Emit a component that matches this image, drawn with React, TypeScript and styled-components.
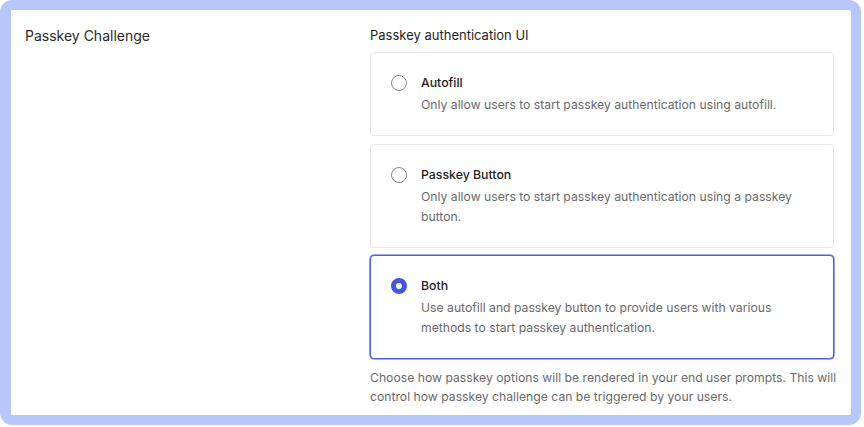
import { useState } from "react";
import styled, { createGlobalStyle } from "styled-components";

const Global = createGlobalStyle`
  html, body { margin: 0; padding: 0; background: #fff; }
  body { font-family: Inter, "Noto Sans", sans-serif; -webkit-font-smoothing: antialiased; }
`;

const Frame = styled.div`
  box-sizing: border-box;
  width: 861px;
  height: 425px;
  border: 10px solid #b7c7fb;
  border-left-width: 11px;
  border-radius: 12px;
  background: #fff;
  display: grid;
  grid-template-columns: 345px 464px;
  padding: 0 0 0 14px;
  overflow: hidden;
`;

const SectionLabel = styled.div`
  padding-top: 16px;
  font-size: 14px;
  line-height: 20px;
  color: #2a2a2a;
`;

const Column = styled.div`
  display: flex;
  flex-direction: column;
  padding-top: 16px;
`;

const FieldLabel = styled.div`
  font-size: 13px;
  line-height: 18px;
  color: #1f1f1f;
  margin-bottom: 8px;
`;

const Options = styled.div`
  display: flex;
  flex-direction: column;
  gap: 7.5px;
`;

const Card = styled.label<{ $active: boolean }>`
  box-sizing: border-box;
  display: flex;
  gap: 14px;
  padding: 20px;
  border: 1px solid ${p => (p.$active ? "#4b5ee4" : "#e6e6e6")};
  box-shadow: ${p => (p.$active ? "0 0 0 0.6px #4b5ee4" : "none")};
  border-radius: 4px;
  cursor: pointer;
  background: #fff;
`;

const Radio = styled.span<{ $active: boolean }>`
  box-sizing: border-box;
  flex: none;
  width: 16px;
  height: 16px;
  margin-top: 2px;
  border-radius: 50%;
  border: ${p => (p.$active ? "5px solid #4356e0" : "1.5px solid #8a8a8a")};
  background: #fff;
`;

const Body = styled.div`
  display: flex;
  flex-direction: column;
`;

const Title = styled.div`
  font-size: 12.3px;
  line-height: 19px;
  font-weight: 500;
  color: #222;
  margin-bottom: 3px;
`;

const Desc = styled.div`
  font-size: 12.2px;
  line-height: 20px;
  color: #6a6a6a;
  max-width: 380px;
`;

const Help = styled.div`
  margin-top: 9px;
  margin-right: -10px;
  font-size: 12.2px;
  line-height: 19px;
  color: #6a6a6a;
`;

const options = [
  {
    id: "autofill",
    title: "Autofill",
    desc: "Only allow users to start passkey authentication using autofill.",
  },
  {
    id: "button",
    title: "Passkey Button",
    desc: "Only allow users to start passkey authentication using a passkey button.",
  },
  {
    id: "both",
    title: "Both",
    desc: "Use autofill and passkey button to provide users with various methods to start passkey authentication.",
  },
];

export default function App() {
  const [value, setValue] = useState("both");

  return (
    <>
      <Global />
      <Frame>
        <SectionLabel>Passkey Challenge</SectionLabel>
        <Column>
          <FieldLabel>Passkey authentication UI</FieldLabel>
          <Options>
            {options.map(o => (
              <Card key={o.id} $active={value === o.id} onClick={() => setValue(o.id)}>
                <Radio $active={value === o.id} />
                <Body>
                  <Title>{o.title}</Title>
                  <Desc>{o.desc}</Desc>
                </Body>
              </Card>
            ))}
          </Options>
          <Help>
            Choose how passkey options will be rendered in your end user prompts. This will
            control how passkey challenge can be triggered by your users.
          </Help>
        </Column>
      </Frame>
    </>
  );
}
